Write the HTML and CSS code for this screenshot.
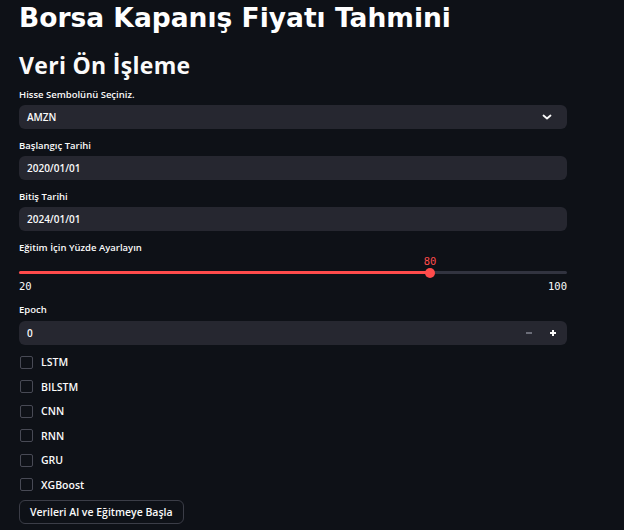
FILE: index.html
```html
<!DOCTYPE html>
<html lang="tr">
<head>
<meta charset="utf-8">
<title>Borsa Kapanış Fiyatı Tahmini</title>
<link rel="stylesheet" href="styles.css">
</head>
<body>
<main class="app">
  <h1 class="title">Borsa Kapanış Fiyatı Tahmini</h1>
  <h2 class="subtitle">Veri Ön İşleme</h2>

  <div class="field">
    <div class="label">Hisse Sembolünü Seçiniz.</div>
    <div class="box select">
      <span class="value">AMZN</span>
      <svg class="chev" width="10" height="8" viewBox="0 0 10 8"><path d="M1.5 2.5 L5 5.5 L8.5 2.5" fill="none" stroke="#fafafa" stroke-width="1.8" stroke-linecap="round" stroke-linejoin="round"/></svg>
    </div>
  </div>

  <div class="field">
    <div class="label">Başlangıç Tarihi</div>
    <div class="box"><span class="value">2020/01/01</span></div>
  </div>

  <div class="field">
    <div class="label">Bitiş Tarihi</div>
    <div class="box"><span class="value">2024/01/01</span></div>
  </div>

  <div class="field slider-field">
    <div class="label">Eğitim İçin Yüzde Ayarlayın</div>
    <div class="slider">
      <div class="track">
        <div class="fill" style="width:75%"></div>
        <div class="thumb" style="left:75%"><span class="thumb-val">80</span></div>
      </div>
    </div>
    <div class="ticks"><span>20</span><span>100</span></div>
  </div>

  <div class="field epoch-field">
    <div class="label">Epoch</div>
    <div class="box number">
      <span class="value">0</span>
      <div class="steps">
        <span class="step minus"></span>
        <span class="step plus"></span>
      </div>
    </div>
  </div>

  <div class="checks">
    <label class="check"><span class="cb"></span><span>LSTM</span></label>
    <label class="check"><span class="cb"></span><span>BILSTM</span></label>
    <label class="check"><span class="cb"></span><span>CNN</span></label>
    <label class="check"><span class="cb"></span><span>RNN</span></label>
    <label class="check"><span class="cb"></span><span>GRU</span></label>
    <label class="check"><span class="cb"></span><span>XGBoost</span></label>
  </div>

  <button class="btn">Verileri Al ve Eğitmeye Başla</button>
</main>
</body>
</html>
```

FILE: styles.css
```css
html, body {
  margin: 0;
  padding: 0;
  background: #0e1117;
}
body {
  color: #fafafa;
  font-family: "Open Sans", "Noto Sans", sans-serif;
}
.app {
  width: 548px;
  padding: 0 0 0 19px;
  display: flex;
  flex-direction: column;
}
.title {
  margin: 0;
  height: 36px;
  font-family: "DejaVu Sans", sans-serif;
  font-weight: bold;
  font-size: 26.5px;
  line-height: 36px;
  letter-spacing: 0;
  color: #ffffff;
}
.subtitle {
  margin: 14px 0 0 0;
  height: 37px;
  font-family: "Open Sans", sans-serif;
  font-weight: 700;
  font-size: 23px;
  line-height: 30px;
  letter-spacing: 0.3px;
  color: #fafafa;
}
.field {
  display: flex;
  flex-direction: column;
  margin-bottom: 9px;
}
.label {
  font-size: 9.5px;
  font-weight: 600;
  line-height: 16px;
  height: 16px;
  margin-bottom: 2px;
}
.box {
  height: 24px;
  background: #262730;
  border-radius: 6px;
  display: flex;
  align-items: center;
  padding: 0 8px;
  box-sizing: border-box;
}
.value {
  font-size: 10px;
  font-weight: 600;
  flex: 1;
}
.chev {
  margin-right: 7px;
}
.slider-field {
  margin-bottom: 0;
}
.slider {
  height: 19px;
  display: flex;
  align-items: flex-end;
}
.track {
  position: relative;
  width: 100%;
  height: 3px;
  border-radius: 2px;
  background: #31333f;
  margin-bottom: 3px;
}
.fill {
  height: 100%;
  background: #ff4b4b;
  border-radius: 2px;
}
.thumb {
  position: absolute;
  top: -3.5px;
  width: 10px;
  height: 10px;
  margin-left: -5px;
  border-radius: 50%;
  background: #ff4b4b;
}
.thumb-val {
  position: absolute;
  bottom: 11px;
  left: 50%;
  transform: translateX(-50%);
  font-family: "DejaVu Sans Mono", monospace;
  font-size: 10.5px;
  color: #ff4b4b;
  line-height: 12px;
}
.ticks {
  display: flex;
  justify-content: space-between;
  font-family: "DejaVu Sans Mono", monospace;
  font-size: 10.5px;
  line-height: 14px;
  height: 14px;
  margin-top: 2px;
  color: #fafafa;
}
.epoch-field {
  margin-top: 9px;
  margin-bottom: 5px;
}
.epoch-field .label {
  margin-bottom: 3px;
}
.steps {
  display: flex;
  gap: 12px;
  align-items: center;
  margin-right: 0;
}
.step {
  position: relative;
  width: 12px;
  height: 12px;
}
.step::before {
  content: "";
  position: absolute;
  left: 3px;
  top: 5px;
  width: 6px;
  height: 2px;
  background: #fafafa;
}
.minus::before {
  background: #6b6d78;
}
.plus::after {
  content: "";
  position: absolute;
  left: 5px;
  top: 3px;
  width: 2px;
  height: 6px;
  background: #fafafa;
}
.checks {
  display: flex;
  flex-direction: column;
}
.check {
  height: 24.5px;
  display: flex;
  align-items: center;
  gap: 8px;
  font-size: 10.5px;
  font-weight: 600;
}
.cb {
  width: 11px;
  height: 11px;
  margin-left: 1px;
  border: 1px solid #484a55;
  border-radius: 2px;
  background: #0e1117;
}
.btn {
  align-self: flex-start;
  margin-top: 3px;
  height: 24px;
  padding: 0 10px;
  background: #0e1117;
  color: #fafafa;
  border: 1px solid #3b3d47;
  border-radius: 6px;
  font-family: "Open Sans", sans-serif;
  font-size: 10.5px;
  font-weight: 600;
}
```
